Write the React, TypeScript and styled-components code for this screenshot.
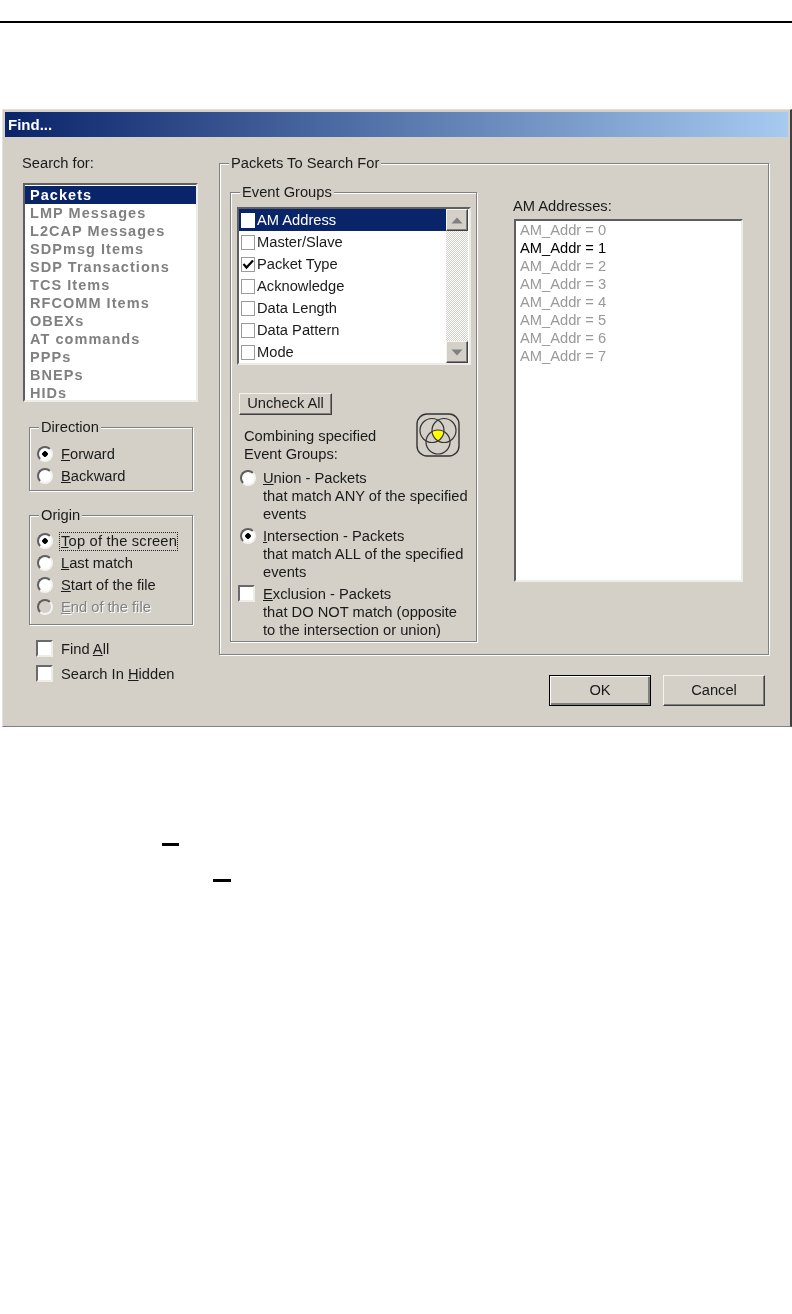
import React from 'react';
import styled, { createGlobalStyle } from 'styled-components';

const searchItems = [
  'LMP Messages',
  'L2CAP Messages',
  'SDPmsg Items',
  'SDP Transactions',
  'TCS Items',
  'RFCOMM Items',
  'OBEXs',
  'AT commands',
  'PPPs',
  'BNEPs',
  'HIDs',
];

const eventGroups = [
  { name: 'AM Address', selected: true },
  { name: 'Master/Slave' },
  { name: 'Packet Type', checked: true },
  { name: 'Acknowledge' },
  { name: 'Data Length' },
  { name: 'Data Pattern' },
  { name: 'Mode' },
];

const addresses = [0, 1, 2, 3, 4, 5, 6, 7];

const VennIcon = () => (
  <svg width="44" height="44" viewBox="0 0 44 44" fill="none">
    <defs>
      <clipPath id="vennLeft">
        <circle cx="16" cy="17.5" r="12" />
      </clipPath>
      <clipPath id="vennRight" clipPath="url(#vennLeft)">
        <circle cx="28" cy="17.5" r="12" />
      </clipPath>
    </defs>
    <circle cx="22" cy="29" r="12" fill="#ffff00" clipPath="url(#vennRight)" />
    <rect x="1" y="1" width="42" height="42" rx="10" stroke="#333" strokeWidth="1.4" />
    <circle cx="16" cy="17.5" r="12" stroke="#333" strokeWidth="1.2" />
    <circle cx="28" cy="17.5" r="12" stroke="#333" strokeWidth="1.2" />
    <circle cx="22" cy="29" r="12" stroke="#333" strokeWidth="1.2" />
  </svg>
);

const App = () => {
  return (
    <>
      <GlobalStyle />
      <Page>
        <TopRule />
        <Dialog>
          <TitleBar>Find...</TitleBar>
          <Body>
            <LeftColumn>
              <SearchLabel>Search for:</SearchLabel>
              <SearchList>
                <SearchRow $selected>Packets</SearchRow>
                {searchItems.map((item) => (
                  <SearchRow key={item}>{item}</SearchRow>
                ))}
              </SearchList>

              <DirectionGroup>
                <GroupTitle $left={2}>Direction</GroupTitle>
                <ChoiceRow>
                  <Radio $checked />
                  <span><Key>F</Key>orward</span>
                </ChoiceRow>
                <ChoiceRow>
                  <Radio />
                  <span><Key>B</Key>ackward</span>
                </ChoiceRow>
              </DirectionGroup>

              <OriginGroup>
                <GroupTitle $left={2}>Origin</GroupTitle>
                <ChoiceRow>
                  <Radio $checked />
                  <Focused><Key>T</Key>op of the screen</Focused>
                </ChoiceRow>
                <ChoiceRow>
                  <Radio />
                  <span><Key>L</Key>ast match</span>
                </ChoiceRow>
                <ChoiceRow>
                  <Radio />
                  <span><Key>S</Key>tart of the file</span>
                </ChoiceRow>
                <ChoiceRow>
                  <Radio $disabled />
                  <DisabledText><Key>E</Key>nd of the file</DisabledText>
                </ChoiceRow>
              </OriginGroup>

              <CheckList>
                <CheckRow>
                  <CheckBox />
                  <span>Find <Key>A</Key>ll</span>
                </CheckRow>
                <CheckRow>
                  <CheckBox />
                  <span>Search In <Key>H</Key>idden</span>
                </CheckRow>
              </CheckList>
            </LeftColumn>

            <RightColumn>
              <PacketsGroup>
                <GroupTitle $left={-1}>Packets To Search For</GroupTitle>
                <PacketsInner>
                  <EventGroups>
                    <GroupTitle $left={3}>Event Groups</GroupTitle>
                    <EventList>
                      <EventRows>
                        {eventGroups.map((group) => (
                          <EventRow key={group.name} $selected={group.selected}>
                            <RowCheck $selected={group.selected}>
                              {group.checked && (
                                <svg width="12" height="12" viewBox="0 0 12 12">
                                  <path d="M1.5 6 L4.5 9.5 L11 2.5" fill="none" stroke="#000" strokeWidth="2.2" />
                                </svg>
                              )}
                            </RowCheck>
                            {group.name}
                          </EventRow>
                        ))}
                      </EventRows>
                      <ScrollBar>
                        <ScrollButton>
                          <svg width="12" height="7" viewBox="0 0 12 7">
                            <path d="M6 0.5 L11.5 6.5 H0.5 Z" fill="#808080" />
                          </svg>
                        </ScrollButton>
                        <ScrollTrack />
                        <ScrollButton>
                          <svg width="12" height="7" viewBox="0 0 12 7">
                            <path d="M0.5 0.5 H11.5 L6 6.5 Z" fill="#808080" />
                          </svg>
                        </ScrollButton>
                      </ScrollBar>
                    </EventList>

                    <UncheckButton>Uncheck All</UncheckButton>

                    <ComboHeader>
                      <ComboText>
                        Combining specified
                        <br />
                        Event Groups:
                      </ComboText>
                      <VennIcon />
                    </ComboHeader>

                    <Options>
                      <Option>
                        <OptionMark>
                          <Radio />
                        </OptionMark>
                        <OptionText>
                          <Key>U</Key>nion - Packets
                          <br />
                          that match ANY of the specified
                          <br />
                          events
                        </OptionText>
                      </Option>
                      <Option>
                        <OptionMark>
                          <Radio $checked />
                        </OptionMark>
                        <OptionText>
                          <Key>I</Key>ntersection - Packets
                          <br />
                          that match ALL of the specified
                          <br />
                          events
                        </OptionText>
                      </Option>
                      <Option>
                        <BoxMark>
                          <CheckBox />
                        </BoxMark>
                        <OptionText>
                          <Key>E</Key>xclusion - Packets
                          <br />
                          that DO NOT match (opposite
                          <br />
                          to the intersection or union)
                        </OptionText>
                      </Option>
                    </Options>
                  </EventGroups>

                  <AddressColumn>
                    <AddressLabel>AM Addresses:</AddressLabel>
                    <AddressList>
                      {addresses.map((n) => (
                        <AddressRow key={n} $active={n === 1}>
                          AM_Addr = {n}
                        </AddressRow>
                      ))}
                    </AddressList>
                  </AddressColumn>
                </PacketsInner>
              </PacketsGroup>

              <Buttons>
                <DialogButton $default>OK</DialogButton>
                <DialogButton>Cancel</DialogButton>
              </Buttons>
            </RightColumn>
          </Body>
        </Dialog>

        <FirstMark />
        <SecondMark />
      </Page>
    </>
  );
};

const GlobalStyle = createGlobalStyle`
  * {
    box-sizing: border-box;
  }
  html, body {
    margin: 0;
    background: #fff;
  }
  body {
    font-family: "Liberation Sans", Arial, sans-serif;
    font-size: 14.7px;
    color: #1a1a1a;
  }
`;

const Page = styled.div`
  height: 1314px;
  padding-top: 21px;
  overflow: hidden;
`;

const TopRule = styled.div`
  height: 2px;
  background: #000;
`;

const Dialog = styled.div`
  margin: 86px 0 0 2px;
  width: 790px;
  height: 618px;
  padding: 2px;
  display: flex;
  flex-direction: column;
  background: #d4d0c8;
  border-top: 1px solid #e4e1da;
  border-left: 1px solid #e4e1da;
  border-right: 2px solid #404040;
  border-bottom: 1px solid #808080;
  filter: blur(0.3px);
`;

const TitleBar = styled.div`
  height: 25px;
  flex: none;
  padding: 2px 0 0 3px;
  font-size: 15px;
  font-weight: bold;
  line-height: 22px;
  color: #fff;
  background: linear-gradient(90deg, #0a246a, #a6caf0);
`;

const Body = styled.div`
  display: flex;
  padding: 17px 0 0 16px;
`;

const LeftColumn = styled.div`
  width: 198px;
  flex: none;
`;

const SearchLabel = styled.div`
  height: 18px;
  line-height: 18px;
  margin-left: 1px;
`;

const SunkenBox = styled.div`
  background: #fff;
  border: 2px solid;
  border-color: #5f5f5f #eeece7 #eeece7 #5f5f5f;
`;

const SearchList = styled(SunkenBox)`
  margin: 11px 0 0 2px;
  width: 175px;
  height: 219px;
  padding-top: 1px;
`;

const SearchRow = styled.div<{ $selected?: boolean }>`
  height: 18px;
  line-height: 18px;
  padding-left: 5px;
  font-size: 14.5px;
  font-weight: bold;
  letter-spacing: 1.05px;
  color: ${(p) => (p.$selected ? '#fff' : '#808080')};
  background: ${(p) => (p.$selected ? '#0a246a' : 'transparent')};
`;

const Group = styled.fieldset`
  margin: 0;
  min-width: 0;
  padding: 0;
  border: 1px solid #808080;
  box-shadow: 1px 1px 0 #fff, inset 1px 1px 0 #fff;
`;

const GroupTitle = styled.legend<{ $left: number }>`
  margin-left: ${(p) => p.$left}px;
  padding: 0 2px;
  height: 18px;
  line-height: 18px;
  background: #d4d0c8;
`;

const DirectionGroup = styled(Group)`
  margin: 16px 0 0 8px;
  width: 164px;
  height: 73px;
  padding: 7px 0 0 7px;
`;

const OriginGroup = styled(Group)`
  margin: 15px 0 0 8px;
  width: 164px;
  height: 119px;
  padding: 6px 0 0 7px;
`;

const ChoiceRow = styled.div`
  display: flex;
  align-items: center;
  gap: 8px;
  height: 22px;
`;

const Radio = styled.span<{ $checked?: boolean; $disabled?: boolean }>`
  width: 16px;
  height: 16px;
  flex: none;
  border-radius: 50%;
  border: 2px solid;
  border-color: #5f5f5f #f4f3ef #f4f3ef #5f5f5f;
  background: ${(p) =>
    p.$checked
      ? 'radial-gradient(circle, #000 0 2.5px, #fff 3px)'
      : p.$disabled
        ? '#d4d0c8'
        : '#fff'};
`;

const Key = styled.span`
  text-decoration: underline;
`;

const Focused = styled.span`
  outline: 1px dotted #222;
  outline-offset: 0;
  line-height: 17px;
  margin-left: -1px;
  padding-left: 1px;
  letter-spacing: 0.2px;
`;

const DisabledText = styled.span`
  color: #808080;
  text-shadow: 1px 1px 0 #fff;
`;

const CheckList = styled.div`
  margin: 11px 0 0 15px;
`;

const CheckRow = styled.div`
  display: flex;
  align-items: center;
  gap: 8px;
  height: 25px;
`;

const CheckBox = styled.span`
  display: block;
  width: 17px;
  height: 17px;
  flex: none;
  background: #fff;
  border: 2px solid;
  border-color: #6a6a6a #eeece7 #eeece7 #6a6a6a;
`;

const RightColumn = styled.div`
  width: 550px;
  flex: none;
`;

const PacketsGroup = styled(Group)`
  display: block;
  width: 550px;
  height: 501px;
  padding: 11px 0 0 10px;
`;

const PacketsInner = styled.div`
  display: flex;
`;

const EventGroups = styled(Group)`
  width: 247px;
  height: 459px;
  flex: none;
  padding: 6px 0 0 6px;
`;

const EventList = styled(SunkenBox)`
  display: flex;
  width: 234px;
  height: 158px;
`;

const EventRows = styled.div`
  flex: 1;
`;

const EventRow = styled.div<{ $selected?: boolean }>`
  display: flex;
  align-items: center;
  gap: 2px;
  height: 22px;
  padding-left: 2px;
  color: ${(p) => (p.$selected ? '#fff' : '#1a1a1a')};
  background: ${(p) => (p.$selected ? '#0a246a' : 'transparent')};
`;

const RowCheck = styled.span<{ $selected?: boolean }>`
  display: flex;
  align-items: center;
  justify-content: center;
  width: 14px;
  height: 15px;
  flex: none;
  background: #fff;
  border: 1px solid ${(p) => (p.$selected ? '#fff' : '#9a9a9a')};
`;

const ScrollBar = styled.div`
  display: flex;
  flex-direction: column;
  width: 22px;
  flex: none;
  margin-right: 1px;
`;

const RaisedFace = styled.div`
  background: #d4d0c8;
  border: 1px solid;
  border-color: #f4f3ef #404040 #404040 #f4f3ef;
  box-shadow: inset -1px -1px 0 #808080;
`;

const ScrollButton = styled(RaisedFace)`
  display: flex;
  align-items: center;
  justify-content: center;
  height: 22px;
  flex: none;
`;

const ScrollTrack = styled.div`
  flex: 1;
  background-image: conic-gradient(#fff 25%, #d4d0c8 0 50%, #fff 0 75%, #d4d0c8 0);
  background-size: 2px 2px;
`;

const UncheckButton = styled(RaisedFace)`
  margin: 28px 0 0 2px;
  width: 93px;
  height: 22px;
  line-height: 19px;
  text-align: center;
`;

const ComboHeader = styled.div`
  display: flex;
  justify-content: space-between;
  width: 216px;
  height: 50px;
  margin: -2px 0 0 7px;
`;

const ComboText = styled.div`
  padding-top: 14px;
  line-height: 18px;
`;

const Options = styled.div`
  display: flex;
  flex-direction: column;
  gap: 4px;
  margin-top: 6px;
`;

const Option = styled.div`
  display: flex;
`;

const OptionMark = styled.div`
  width: 26px;
  height: 18px;
  flex: none;
  display: flex;
  align-items: center;
  padding-left: 3px;
`;

const BoxMark = styled.div`
  width: 26px;
  flex: none;
  padding-left: 1px;
`;

const OptionText = styled.div`
  line-height: 18px;
  white-space: nowrap;
`;

const AddressColumn = styled.div`
  margin-left: 36px;
  padding-top: 14px;
`;

const AddressLabel = styled.div`
  height: 18px;
  line-height: 18px;
`;

const AddressList = styled(SunkenBox)`
  margin: 4px 0 0 1px;
  width: 229px;
  height: 363px;
  padding-left: 4px;
`;

const AddressRow = styled.div<{ $active?: boolean }>`
  height: 18px;
  line-height: 18px;
  color: ${(p) => (p.$active ? '#000' : '#999')};
`;

const Buttons = styled.div`
  display: flex;
  justify-content: flex-end;
  gap: 12px;
  margin-top: 20px;
  padding-right: 4px;
`;

const DialogButton = styled(RaisedFace)<{ $default?: boolean }>`
  width: 102px;
  height: 31px;
  line-height: 28px;
  text-align: center;
  ${(p) =>
    p.$default &&
    `
    border-color: #000;
    box-shadow: inset 1px 1px 0 #fff, inset -2px -2px 0 #808080;
  `}
`;

const FirstMark = styled.div`
  width: 17px;
  height: 3px;
  margin: 116px 0 0 162px;
  background: #000;
`;

const SecondMark = styled.div`
  width: 18px;
  height: 3px;
  margin: 33px 0 0 213px;
  background: #000;
`;

export default App;
